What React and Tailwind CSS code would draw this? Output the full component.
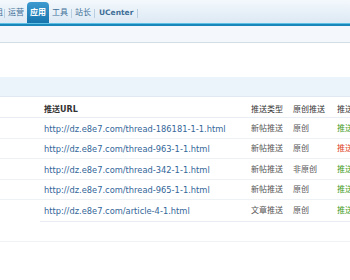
export default function App() {
  const rows = [
    { url: "http://dz.e8e7.com/thread-186181-1-1.html", type: "新帖推送", orig: "原创", ok: true },
    { url: "http://dz.e8e7.com/thread-963-1-1.html", type: "新帖推送", orig: "原创", ok: false },
    { url: "http://dz.e8e7.com/thread-342-1-1.html", type: "新帖推送", orig: "非原创", ok: true },
    { url: "http://dz.e8e7.com/thread-965-1-1.html", type: "新帖推送", orig: "原创", ok: true },
    { url: "http://dz.e8e7.com/article-4-1.html", type: "文章推送", orig: "原创", ok: true },
  ];
  const cn = { fontFamily: '"DejaVu Sans", "Noto Sans CJK SC", sans-serif' };
  return (
    <div className="w-[350px] h-[280px] overflow-hidden bg-white" style={cn}>
      {/* top nav */}
      <div className="h-[23px] bg-gradient-to-b from-[#f3f8fc] to-[#dde9f4] flex items-end text-[8px] text-[#3f6f98]">
        <div className="flex items-center h-[20px] -ml-[5px]">
          <span className="pr-[1px]">组</span>
          <span className="w-px h-[9px] bg-[#b9cfe1]"></span>
          <span className="px-[3px]">运营</span>
          <span className="h-[21px] px-[3px] flex items-center bg-gradient-to-b from-[#3c9ad0] to-[#1675ad] text-white font-bold rounded-t-[4px] mt-[-1px]">应用</span>
          <span className="px-[3px]">工具</span>
          <span className="w-px h-[9px] bg-[#b9cfe1]"></span>
          <span className="px-[3px]">站长</span>
          <span className="w-px h-[9px] bg-[#b9cfe1]"></span>
          <span className="px-[4px] font-bold text-[7.5px]">UCenter</span>
          <span className="w-px h-[9px] bg-[#b9cfe1]"></span>
        </div>
      </div>
      <div className="h-[3px] bg-[#1a87bb] border-t border-[#5fc0e6]"></div>
      {/* sub bar */}
      <div className="h-[17px] bg-[#f4f8fc] border-b border-[#d3dde6]"></div>
      <div className="h-[34px]"></div>
      {/* band */}
      <div className="h-[20px] bg-[#ebf3fb] border-b border-[#e0e9f2]"></div>
      {/* table */}
      <div className="text-[8px]">
        <div className="grid grid-cols-[44px_207px_42px_44px_1fr] h-[21px] pt-[5px] items-center border-b border-[#e8eef3] text-[#333]">
          <span></span>
          <span className="font-bold">推送URL</span>
          <span>推送类型</span>
          <span>原创推送</span>
          <span className="whitespace-nowrap">推送状态</span>
        </div>
        {rows.map((r, i) => (
          <div key={i} className={"grid grid-cols-[44px_207px_42px_44px_1fr] h-[20.5px] pt-[2px] items-center " + (i < 4 ? "border-b border-[#eef2f5]" : "")}>
            <span></span>
            <span className="text-[#336699] whitespace-nowrap text-[8.3px]">{r.url}</span>
            <span className="text-[#555]">{r.type}</span>
            <span className="text-[#555]">{r.orig}</span>
            <span className={"whitespace-nowrap " + (r.ok ? "text-[#3c9a1c]" : "text-[#e0401c]")}>{r.ok ? "推送成功" : "推送失败"}</span>
          </div>
        ))}
        <div className="ml-[40px] h-px bg-[#e8eef3]"></div>
        <div className="h-[19px]"></div>
        <div className="h-px bg-[#f0f3f6]"></div>
      </div>
    </div>
  );
}
